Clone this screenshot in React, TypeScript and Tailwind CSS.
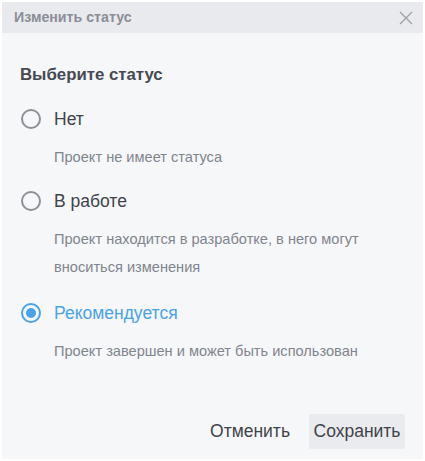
import React from "react";

function Radio({ checked }: { checked?: boolean }) {
  return checked ? (
    <span className="flex h-[20px] w-[20px] shrink-0 items-center justify-center rounded-full border-[2px] border-[#4aa3e8]">
      <span className="h-[10px] w-[10px] rounded-full bg-[#4aa3e8]" />
    </span>
  ) : (
    <span className="h-[20px] w-[20px] shrink-0 rounded-full border-[2px] border-[#8c9098]" />
  );
}

function Option({
  label,
  desc,
  checked,
  extra,
}: {
  label: string;
  desc: React.ReactNode;
  checked?: boolean;
  extra?: string;
}) {
  return (
    <div className={`flex flex-col ${extra ?? ""}`}>
      <div className="flex h-[24px] items-center gap-[13px] pl-[19px]">
        <Radio checked={checked} />
        <span
          className={`text-[17.5px] ${checked ? "text-[#4aa3e8]" : "text-[#3f434a]"}`}
        >
          {label}
        </span>
      </div>
      <div className="mt-[12px] pl-[52px] pr-[10px] text-[14.6px] leading-[28px] text-[#80858d]">
        {desc}
      </div>
    </div>
  );
}

export default function App() {
  return (
    <div
      className="h-[461px] w-[425px] bg-white p-[2px]"
      style={{ fontFamily: '"Liberation Sans", Arial, sans-serif' }}
    >
      <div className="flex h-[457px] flex-col bg-[#f6f7f9]">
        <div className="flex h-[31px] items-center justify-between bg-[#e9eaee] pl-[12px] pr-[10px]">
          <span className="text-[14.2px] font-bold text-[#8a8e96]">Изменить статус</span>
          <svg width="14" height="14" viewBox="0 0 14 14" className="text-[#9a9ea5]">
            <path d="M1 1L13 13M13 1L1 13" stroke="currentColor" strokeWidth="1.2" />
          </svg>
        </div>
        <div className="pl-[18px] pt-[29px] text-[16.8px] font-bold text-[#454a52]">
          Выберите статус
        </div>
        <div className="mt-[20px] flex flex-col gap-[18px]">
          <Option label="Нет" desc="Проект не имеет статуса" />
          <Option
            label="В работе"
            desc={
              <>
                Проект находится в разработке, в него могут
                <br />
                вноситься изменения
              </>
            }
          />
          <Option
            label="Рекомендуется"
            checked
            extra="mt-[2px]"
            desc="Проект завершен и может быть использован"
          />
        </div>
        <div className="mt-auto mb-[10px] flex items-center justify-end gap-[18px] pr-[18px]">
          <button className="h-[35px] px-[1px] text-[17.5px] text-[#3f434a]">Отменить</button>
          <button className="h-[35px] w-[96px] rounded-[2px] bg-[#eaebef] text-[17.5px] text-[#3f434a]">
            Сохранить
          </button>
        </div>
      </div>
    </div>
  );
}
